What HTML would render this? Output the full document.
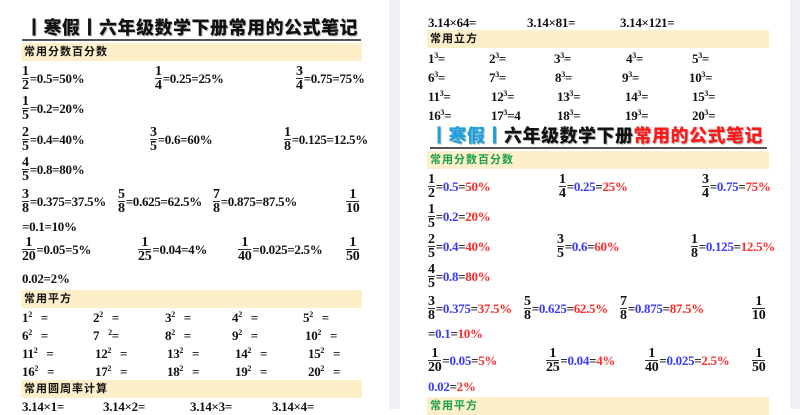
<!DOCTYPE html>
<html><head><meta charset="utf-8"><style>
*{margin:0;padding:0;box-sizing:border-box}
body{width:800px;height:409px;overflow:hidden;background:#fff;position:relative;font-family:"Liberation Serif","Noto Serif CJK SC",serif;color:#111}
.g{position:absolute;top:0;height:409px;background:#eef0f4}
.h{position:absolute;height:18px;background:#fcefc9;font:bold 11px "Liberation Sans","Noto Sans CJK SC",sans-serif;line-height:18px;padding-left:3px;letter-spacing:1px}
.ti{position:absolute;font:900 18px "Liberation Sans","Noto Sans CJK SC",sans-serif;white-space:nowrap;line-height:22px;letter-spacing:0.5px;text-shadow:1px 1px 0 #bbb}
.ul{position:absolute;height:2px;background:#555}
.fi{position:absolute;display:flex;align-items:center;font:bold 13px "Liberation Serif","Noto Serif CJK SC",serif;white-space:nowrap;letter-spacing:-0.3px}
.fr{display:inline-flex;flex-direction:column;align-items:center;line-height:12px;margin-right:1px;font-size:14px}
.fr .d{border-top:1px solid #333;padding-top:1px}
.t{font:bold 13px "Liberation Serif",serif;white-space:nowrap;position:absolute;letter-spacing:-0.3px}
sup{font-size:8px;vertical-align:5px}
.b{color:#3a3aff}.r{color:#ff2b2b}
</style></head><body>
<div class="g" style="left:389px;width:11px"></div>
<div class="g" style="left:790px;width:10px"></div>

<div class="ti" style="left:25px;top:17px">丨寒假丨六年级数学下册常用的公式笔记</div>
<div class="ul" style="left:22px;top:39px;width:339px"></div>
<div class="h" style="left:21px;top:43px;width:341px">常用分数百分数</div>

<div class="fi" style="left:22px;top:66px"><span class="fr"><span>1</span><span class="d">2</span></span>=0.5=50%</div>
<div class="fi" style="left:155px;top:66px"><span class="fr"><span>1</span><span class="d">4</span></span>=0.25=25%</div>
<div class="fi" style="left:296px;top:66px"><span class="fr"><span>3</span><span class="d">4</span></span>=0.75=75%</div>
<div class="fi" style="left:22px;top:96px"><span class="fr"><span>1</span><span class="d">5</span></span>=0.2=20%</div>
<div class="fi" style="left:22px;top:127px"><span class="fr"><span>2</span><span class="d">5</span></span>=0.4=40%</div>
<div class="fi" style="left:150px;top:127px"><span class="fr"><span>3</span><span class="d">5</span></span>=0.6=60%</div>
<div class="fi" style="left:284px;top:127px"><span class="fr"><span>1</span><span class="d">8</span></span>=0.125=12.5%</div>
<div class="fi" style="left:22px;top:157px"><span class="fr"><span>4</span><span class="d">5</span></span>=0.8=80%</div>
<div class="fi" style="left:22px;top:189px"><span class="fr"><span>3</span><span class="d">8</span></span>=0.375=37.5%</div>
<div class="fi" style="left:118px;top:189px"><span class="fr"><span>5</span><span class="d">8</span></span>=0.625=62.5%</div>
<div class="fi" style="left:213px;top:189px"><span class="fr"><span>7</span><span class="d">8</span></span>=0.875=87.5%</div>
<div class="fi" style="left:346px;top:189px"><span class="fr"><span>1</span><span class="d">10</span></span></div>
<div class="t" style="left:22px;top:219px">=0.1=10%</div>
<div class="fi" style="left:22px;top:237px"><span class="fr"><span>1</span><span class="d">20</span></span>=0.05=5%</div>
<div class="fi" style="left:138px;top:237px"><span class="fr"><span>1</span><span class="d">25</span></span>=0.04=4%</div>
<div class="fi" style="left:238px;top:237px"><span class="fr"><span>1</span><span class="d">40</span></span>=0.025=2.5%</div>
<div class="fi" style="left:346px;top:237px"><span class="fr"><span>1</span><span class="d">50</span></span></div>
<div class="t" style="left:22px;top:271px">0.02=2%</div>

<div class="h" style="left:21px;top:290px;width:341px">常用平方</div>
<div class="t" style="left:22px;top:310px">1<sup>2</sup>&nbsp;&nbsp; =</div>
<div class="t" style="left:93px;top:310px">2<sup>2</sup>&nbsp;&nbsp; =</div>
<div class="t" style="left:165px;top:310px">3<sup>2</sup>&nbsp;&nbsp; =</div>
<div class="t" style="left:232px;top:310px">4<sup>2</sup>&nbsp;&nbsp; =</div>
<div class="t" style="left:303px;top:310px">5<sup>2</sup>&nbsp;&nbsp; =</div>
<div class="t" style="left:22px;top:328px">6<sup>2</sup>&nbsp;&nbsp; =</div>
<div class="t" style="left:93px;top:328px">7&nbsp;&nbsp; <sup>2</sup>=</div>
<div class="t" style="left:165px;top:328px">8<sup>2</sup>&nbsp;&nbsp; =</div>
<div class="t" style="left:232px;top:328px">9<sup>2</sup>&nbsp;&nbsp; =</div>
<div class="t" style="left:305px;top:328px">10<sup>2</sup>&nbsp;&nbsp; =</div>
<div class="t" style="left:22px;top:346px">11<sup>2</sup>&nbsp;&nbsp; =</div>
<div class="t" style="left:95px;top:346px">12<sup>2</sup>&nbsp;&nbsp; =</div>
<div class="t" style="left:167px;top:346px">13<sup>2</sup>&nbsp;&nbsp; =</div>
<div class="t" style="left:235px;top:346px">14<sup>2</sup>&nbsp;&nbsp; =</div>
<div class="t" style="left:308px;top:346px">15<sup>2</sup>&nbsp;&nbsp; =</div>
<div class="t" style="left:22px;top:364px">16<sup>2</sup>&nbsp;&nbsp; =</div>
<div class="t" style="left:95px;top:364px">17<sup>2</sup>&nbsp;&nbsp; =</div>
<div class="t" style="left:167px;top:364px">18<sup>2</sup>&nbsp;&nbsp; =</div>
<div class="t" style="left:235px;top:364px">19<sup>2</sup>&nbsp;&nbsp; =</div>
<div class="t" style="left:308px;top:364px">20<sup>2</sup>&nbsp;&nbsp; =</div>
<div class="h" style="left:21px;top:380px;width:341px">常用圆周率计算</div>
<div class="t" style="left:22px;top:399px">3.14×1=</div>
<div class="t" style="left:103px;top:399px">3.14×2=</div>
<div class="t" style="left:190px;top:399px">3.14×3=</div>
<div class="t" style="left:272px;top:399px">3.14×4=</div>

<div class="t" style="left:428px;top:15px">3.14×64=</div>
<div class="t" style="left:527px;top:15px">3.14×81=</div>
<div class="t" style="left:620px;top:15px">3.14×121=</div>
<div class="h" style="left:427px;top:30px;width:342px">常用立方</div>
<div class="t" style="left:428px;top:51px">1<sup>3</sup>=</div>
<div class="t" style="left:489px;top:51px">2<sup>3</sup>=</div>
<div class="t" style="left:554px;top:51px">3<sup>3</sup>=</div>
<div class="t" style="left:626px;top:51px">4<sup>3</sup>=</div>
<div class="t" style="left:692px;top:51px">5<sup>3</sup>=</div>
<div class="t" style="left:428px;top:70px">6<sup>3</sup>=</div>
<div class="t" style="left:489px;top:70px">7<sup>3</sup>=</div>
<div class="t" style="left:555px;top:70px">8<sup>3</sup>=</div>
<div class="t" style="left:622px;top:70px">9<sup>3</sup>=</div>
<div class="t" style="left:689px;top:70px">10<sup>3</sup>=</div>
<div class="t" style="left:428px;top:89px">11<sup>3</sup>=</div>
<div class="t" style="left:491px;top:89px">12<sup>3</sup>=</div>
<div class="t" style="left:557px;top:89px">13<sup>3</sup>=</div>
<div class="t" style="left:625px;top:89px">14<sup>3</sup>=</div>
<div class="t" style="left:692px;top:89px">15<sup>3</sup>=</div>
<div class="t" style="left:428px;top:108px">16<sup>3</sup>=</div>
<div class="t" style="left:491px;top:108px">17<sup>3</sup>=4</div>
<div class="t" style="left:557px;top:108px">18<sup>3</sup>=</div>
<div class="t" style="left:625px;top:108px">19<sup>3</sup>=</div>
<div class="t" style="left:692px;top:108px">20<sup>3</sup>=</div>

<div class="ti" style="left:430px;top:125px"><span style="color:#1a9fe0">丨寒假丨</span>六年级数学下册<span style="color:#ff1a1a">常用的公式笔记</span></div>
<div class="ul" style="left:430px;top:147px;width:337px"></div>
<div class="h" style="left:427px;top:151px;width:342px;color:#1aa04a">常用分数百分数</div>

<div class="fi" style="left:428px;top:174px"><span class="fr"><span>1</span><span class="d">2</span></span>=<span class="b">0.5</span>=<span class="r">50%</span></div>
<div class="fi" style="left:559px;top:174px"><span class="fr"><span>1</span><span class="d">4</span></span>=<span class="b">0.25</span>=<span class="r">25%</span></div>
<div class="fi" style="left:702px;top:174px"><span class="fr"><span>3</span><span class="d">4</span></span>=<span class="b">0.75</span>=<span class="r">75%</span></div>
<div class="fi" style="left:428px;top:204px"><span class="fr"><span>1</span><span class="d">5</span></span>=<span class="b">0.2</span>=<span class="r">20%</span></div>
<div class="fi" style="left:428px;top:234px"><span class="fr"><span>2</span><span class="d">5</span></span>=<span class="b">0.4</span>=<span class="r">40%</span></div>
<div class="fi" style="left:557px;top:234px"><span class="fr"><span>3</span><span class="d">5</span></span>=<span class="b">0.6</span>=<span class="r">60%</span></div>
<div class="fi" style="left:691px;top:234px"><span class="fr"><span>1</span><span class="d">8</span></span>=<span class="b">0.125</span>=<span class="r">12.5%</span></div>
<div class="fi" style="left:428px;top:264px"><span class="fr"><span>4</span><span class="d">5</span></span>=<span class="b">0.8</span>=<span class="r">80%</span></div>
<div class="fi" style="left:428px;top:296px"><span class="fr"><span>3</span><span class="d">8</span></span>=<span class="b">0.375</span>=<span class="r">37.5%</span></div>
<div class="fi" style="left:524px;top:296px"><span class="fr"><span>5</span><span class="d">8</span></span>=<span class="b">0.625</span>=<span class="r">62.5%</span></div>
<div class="fi" style="left:620px;top:296px"><span class="fr"><span>7</span><span class="d">8</span></span>=<span class="b">0.875</span>=<span class="r">87.5%</span></div>
<div class="fi" style="left:752px;top:296px"><span class="fr"><span>1</span><span class="d">10</span></span></div>
<div class="t" style="left:428px;top:326px">=<span class="b">0.1</span>=<span class="r">10%</span></div>
<div class="fi" style="left:428px;top:348px"><span class="fr"><span>1</span><span class="d">20</span></span>=<span class="b">0.05</span>=<span class="r">5%</span></div>
<div class="fi" style="left:546px;top:348px"><span class="fr"><span>1</span><span class="d">25</span></span>=<span class="b">0.04</span>=<span class="r">4%</span></div>
<div class="fi" style="left:645px;top:348px"><span class="fr"><span>1</span><span class="d">40</span></span>=<span class="b">0.025</span>=<span class="r">2.5%</span></div>
<div class="fi" style="left:752px;top:348px"><span class="fr"><span>1</span><span class="d">50</span></span></div>
<div class="t" style="left:428px;top:379px"><span class="b">0.02</span>=<span class="r">2%</span></div>
<div class="h" style="left:427px;top:397px;width:342px;color:#1aa04a">常用平方</div>
</body></html>
